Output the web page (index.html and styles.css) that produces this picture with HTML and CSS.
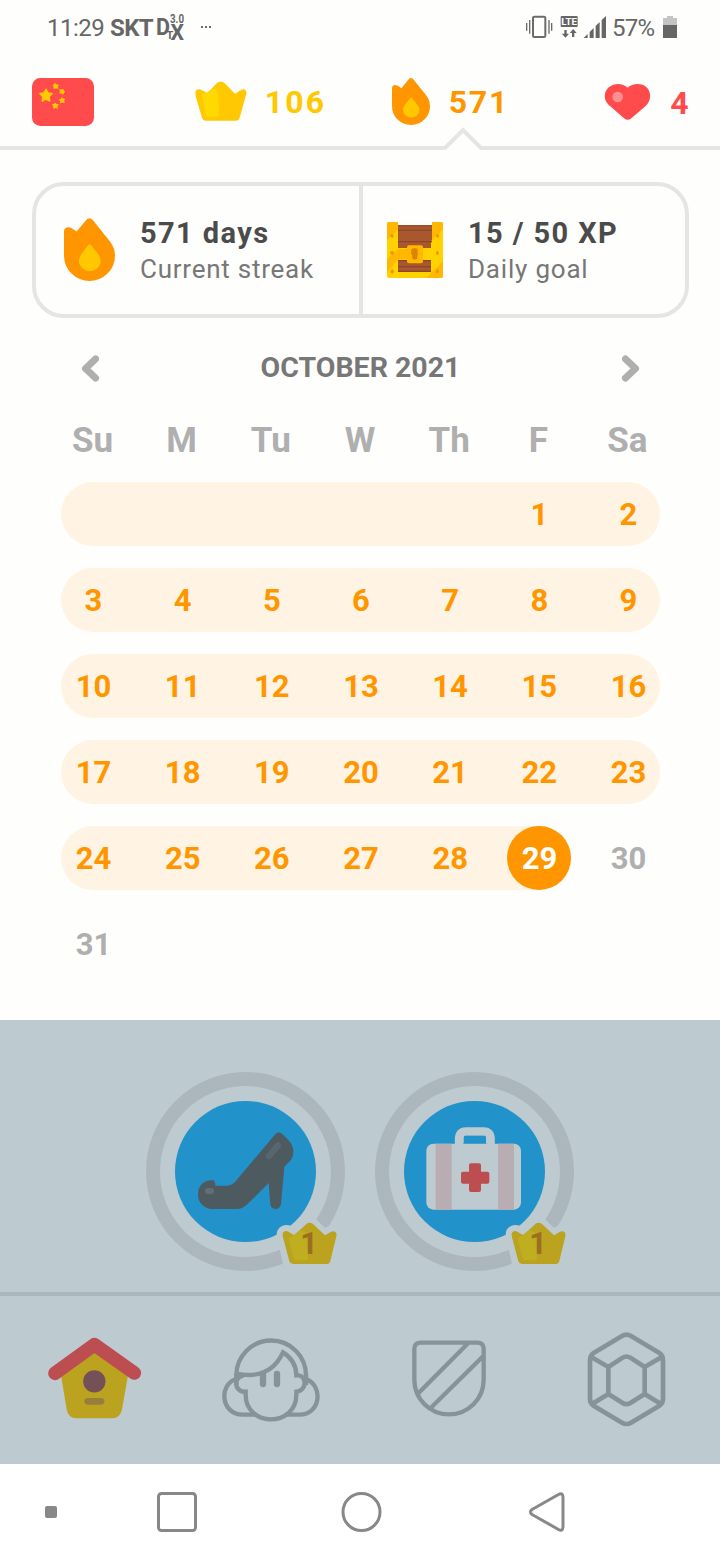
FILE: index.html
```
<!DOCTYPE html>
<html lang="en">
<head>
<meta charset="utf-8">
<title>Streak calendar</title>
<link rel="stylesheet" href="styles.css">
</head>
<body>
<svg width="0" height="0" class="defs">
  <defs>
    <g id="flame">
      <path fill="#ff9600" d="M132 184Q132 172 144 171Q152 170 170 184L199 149Q208 138 219 149L272 215Q286 234 286 257A77 76 0 0 1 132 257Z"/>
      <path fill="#ffc800" d="M205 225Q209 219 214 225L235 252Q243 262 243 271A33 32 0 0 1 177 271Q177 262 184 252Z"/>
    </g>
    <g id="shiny-crown">
      <path class="crown-base" d="M458 524Q458 513 469 513Q474 513 480 518L493 526L529 492Q539 484 549 492L585 526L602 516Q610 511 617 517Q621 521 619 529L601 603Q599 612 590 612H489Q481 612 478 604L459 532Z"/>
      <path class="crown-shine" d="M476 538Q477 530 487 529L505 514Q512 510 527 516L534 592Q535 601 525 601H501Q493 601 491 594Z"/>
    </g>
    <path id="crown-cut" d="M440 524Q440 504 458 497Q469 492 485 498L494 502L521 477Q539 462 557 477L585 503L603 494L650 500L640 640H465L443 540Z"/>
  </defs>
</svg>

<header class="status">
  <span class="time">11:29</span>
  <span class="carrier">SKT</span>
  <svg class="dmb" width="27" height="28" viewBox="0 0 27 28">
    <text x="-1" y="22" class="dmb-big" textLength="14" lengthAdjust="spacingAndGlyphs">D</text>
    <text x="9.500" y="26" class="dmb-small">T</text>
    <text x="13" y="9.500" class="dmb-tiny" textLength="14" lengthAdjust="spacingAndGlyphs">3.0</text>
    <text x="13.500" y="26.500" class="dmb-x" textLength="13.500" lengthAdjust="spacingAndGlyphs">X</text>
  </svg>
  <svg class="dots" width="10" height="2" viewBox="0 0 10 2"><path fill="#6b6b6b" d="M0 0h2v2H0zM4 0h2v2H4zM8 0h2v2H8z"/></svg>
  <svg class="tray" width="82" height="26" viewBox="496 42 246 78">
    <g fill="none" stroke="#6b6b6b">
      <rect x="520" y="50" width="37" height="61" rx="4" stroke-width="6"/>
      <path stroke-width="4" d="M510 60V101M501 69V92M568 60V101M576 69V92"/>
    </g>
    <rect x="603" y="48" width="51" height="33" rx="3" fill="#666"/>
    <text x="605" y="75" class="lte" textLength="47" lengthAdjust="spacingAndGlyphs">LTE</text>
    <path fill="#666" d="M614 90h7v11h7l-10.500 12-11-12h7.500zM637 111h7V99h7l-10.500-12-10.500 12h7zM672 114l12-12v12zM690 96l12-12v30h-12zM708 78l12-12v48h-12zM726 60l13-12v66h-13z"/>
  </svg>
  <span class="percent">57%</span>
  <svg class="battery" width="14" height="22" viewBox="0 0 14 22"><path fill="#c4c4c4" d="M4 0h6v2h4v8H0V2h4z"/><path fill="#666" d="M0 9h14v13H0z"/></svg>
</header>

<section class="stats">
  <div class="stats-row">
    <svg class="flag" width="62" height="48" viewBox="96 234 186 144">
      <rect x="96" y="234" width="186" height="144" rx="25" fill="#ff4b4b"/>
      <g fill="#ffc800" stroke="#ffc800" stroke-linejoin="round">
        <path stroke-width="5" d="M138 268L144 279L156 281L147 290L149 303L138 297L127 303L129 290L120 281L132 279Z"/>
        <path stroke-width="3" d="M165 250l4 5 6 0-3 5 2 5-6-1-6 2 0-6-3-5 5-1zM188 267l2 5 5 3-5 3-1 5-4-4-6 0 3-5-3-5 6 1zM185 293l3 4 6 0-3 5 2 6-6-2-5 3 0-6-4-4 6-1zM165 309l4 4 6 1-4 5 2 6-6-2-6 2 0-6-3-5 6-1z"/>
      </g>
    </svg>
    <div class="stat crowns">
      <svg width="52" height="40" viewBox="584 244 156 120">
        <path fill="#ffc800" d="M585 281Q585 269 596 269Q602 269 621 281L649 251Q661 240 673 251L704 282L722 271Q732 266 737 273Q740 278 737 286L718 354Q715 363 706 363H617Q608 363 605 354L586 290Z"/>
        <path fill="#ffd900" d="M604 286Q606 279 619 279Q631 268 642 268Q651 268 652 278L657 344Q657 353 648 353H628Q620 353 617 346Z"/>
      </svg>
      <span>106</span>
    </div>
    <div class="stat streak">
      <svg width="38" height="47" viewBox="132 143 154 190" preserveAspectRatio="none"><use href="#flame"/></svg>
      <span>571</span>
    </div>
    <div class="stat hearts">
      <svg width="46" height="36" viewBox="736 252 138 108">
        <path fill="#ff4b4b" d="M804 263Q792 252 775 252C741 252 724 287 744 311Q747 315 751 318L793 355Q804 364 815 355L858 318C884 294 871 252 834 252Q816 252 804 263Z"/>
        <circle cx="774" cy="291" r="16" fill="#ff9090"/>
      </svg>
      <span>4</span>
    </div>
  </div>
  <svg class="notch" width="720" height="23" viewBox="0 0 720 23"><path fill="none" stroke="#e5e5e5" stroke-width="4" d="M0 21H445L463 3L481 21H720"/></svg>
</section>

<main>
  <section class="summary">
    <div class="summary-item">
      <svg class="big-flame" width="51" height="63" viewBox="132 143 154 190"><use href="#flame"/></svg>
      <div class="summary-text"><b class="days">571 days</b><span class="cur">Current streak</span></div>
    </div>
    <div class="summary-item goal">
      <svg width="56" height="56" viewBox="81 156 168 168">
        <rect x="81" y="156" width="168" height="168" rx="6" fill="#ffd200"/>
        <path fill="#ffb700" d="M86 156H114V177L81 210V161Q81 156 86 156ZM216 156H244Q249 156 249 161V178L216 211ZM81 268L114 237H142V268H114L81 308ZM249 273V318Q249 324 243 324H200Z"/>
        <path fill="#fefefd" d="M114 155h102v11H114z"/>
        <path fill="#a9572d" d="M114 166h102v44l-3 3v21H114zM114 270h99v35H114z"/>
        <path fill="#8d452b" d="M114 166h102v3H114zM114 179h102v4H114zM114 213h102v4H114zM114 270h99v4H114zM114 288h99v4H114zM114 302h99v4H114z"/>
        <path fill="#ffd200" d="M114 237h102v31H114z"/><path fill="#ffb700" d="M114 237h28v31h-28z"/>
        <rect x="141" y="226" width="48" height="54" rx="6" fill="#ffb700"/>
        <path fill="#dc8500" d="M154 238l9-4 10 3v18l-2 12-9 2-6-5 1-7-4-7z"/>
        <path fill="#eb9a00" d="M90 194l7-3 5 6-4 7-7-3zM228 194l7-3 3 6-4 7-6-3zM91 245l6-3 6 6-5 8-7-4zM228 245l6-3 3 6-4 8-5-4zM91 301l6-3 6 6-5 7-7-3zM228 300l6-2 3 6-4 7-5-3z"/>
      </svg>
      <div class="summary-text"><b class="xp">15 / 50 XP</b><span class="daily">Daily goal</span></div>
    </div>
  </section>

  <section class="calendar">
    <div class="month">
      <svg width="17" height="27" viewBox="0 0 17 27"><path d="M13.500 4L3.500 13.500L13.500 23"/></svg>
      <h1>OCTOBER 2021</h1>
      <svg width="17" height="27" viewBox="0 0 17 27"><path d="M3.500 4L13.500 13.500L3.500 23"/></svg>
    </div>
    <div class="week names"><span>Su</span><span>M</span><span>Tu</span><span>W</span><span>Th</span><span>F</span><span>Sa</span></div>
    <div class="week lit"><span></span><span></span><span></span><span></span><span></span><span>1</span><span>2</span></div>
    <div class="week lit"><span>3</span><span>4</span><span>5</span><span>6</span><span>7</span><span>8</span><span>9</span></div>
    <div class="week lit"><span>10</span><span>11</span><span>12</span><span>13</span><span>14</span><span>15</span><span>16</span></div>
    <div class="week lit"><span>17</span><span>18</span><span>19</span><span>20</span><span>21</span><span>22</span><span>23</span></div>
    <div class="week">
      <div class="week lit partial"><span>24</span><span>25</span><span>26</span><span>27</span><span>28</span><span class="today">29</span></div>
      <span>30</span>
    </div>
    <div class="week"><span>31</span></div>
  </section>
</main>

<section class="skills">
  <svg width="199" height="199" viewBox="48 36 597 597">
    <circle cx="346.500" cy="334.500" r="277.500" fill="none" stroke="#abb7bd" stroke-width="42"/>
    <circle cx="346.500" cy="334.500" r="211.500" fill="#2192ca"/>
    <path fill="#4d5a60" d="M437 221Q446 212 456 221L475 240Q490 256 490 276Q490 292 480 303L463 320L453 433Q450 447 436 447Q423 446 421 433L416 369L352 433Q338 447 321 447H247A43 43 0 0 1 204 404Q204 363 248 360Q256 362 256 377H289Q304 377 315 366Z"/>
    <path stroke="#58666d" stroke-width="19" stroke-linecap="round" d="M417 288L444 256"/>
    <rect x="225" y="384" width="27" height="18" rx="9" fill="#616e75"/>
    <use href="#crown-cut" fill="#bdcacf"/>
    <use href="#shiny-crown"/>
    <text x="511" y="581" class="level">1</text>
  </svg>
  <svg width="199" height="199" viewBox="45 36 597 597">
    <circle cx="343.500" cy="334.500" r="277.500" fill="none" stroke="#abb7bd" stroke-width="42"/>
    <circle cx="343.500" cy="334.500" r="211.500" fill="#2192ca"/>
    <path fill="none" stroke="#bdcacf" stroke-width="25" d="M297 258V238Q297 214 318 214H371Q392 214 392 238V258"/>
    <path fill="none" stroke="#bdcacf" stroke-width="6" d="M308 250V232Q308 223 317 223H372Q381 223 381 232V250"/>
    <rect x="199" y="251" width="284" height="198" rx="21" fill="#bdcacf"/>
    <path fill="#b8adb3" d="M227 251h48v198h-48zM414 251h48v198h-48z"/>
    <path fill="#bc4d50" d="M333 310H357Q363 310 363 316V335H382Q388 335 388 341V365Q388 371 382 371H363V390Q363 396 357 396H333Q327 396 327 390V371H309Q303 371 303 365V341Q303 335 309 335H327V316Q327 310 333 310Z"/>
    <g transform="translate(-3 0)">
      <use href="#crown-cut" fill="#bdcacf"/>
      <use href="#shiny-crown"/>
      <text x="511" y="581" class="level">1</text>
    </g>
  </svg>
</section>

<nav class="tabs">
  <svg class="tab-home" width="94" height="82" viewBox="83 170 282 246">
    <path fill="#bba31f" d="M222 205L323 285L305 387Q300 414 275 414H169Q143 414 139 387L122 285Z"/>
    <path fill="none" stroke="#bc4d50" stroke-width="41" stroke-linecap="round" stroke-linejoin="round" d="M104 279L222 193L342 278"/>
    <circle cx="222" cy="303" r="33.500" fill="#765057"/>
    <rect x="192" y="353" width="60" height="20" rx="10" fill="#997d3c"/>
  </svg>
  <svg class="tab-profile" width="98" height="84" viewBox="606 174 294 252">
    <g fill="none" stroke="#86949a" stroke-width="13">
      <path d="M649 292V286A104.500 104.500 0 0 1 858 286V292"/>
      <path d="M650 281Q750 301 789 217Q829 242 829 286C862 283 862 333 829 335V345C829 390 793 418 753 418S677 390 677 345V335C654 337 643 316 652 298Q657 290 670 287"/>
      <path d="M649 297C595 313 602 404 669 404H707M799 404H839C902 404 911 317 858 297M649 280V316M858 280V316"/>
      <path stroke-width="19" stroke-linecap="round" d="M729 284V312M771 282V312"/>
    </g>
  </svg>
  <svg class="tab-league" width="74" height="77" viewBox="96 181 222 231">
    <path fill="none" stroke="#86949a" stroke-width="13" d="M123 189H292Q311 189 311 208V300A104 104 0 0 1 103 300V208Q103 189 123 189ZM265 190L115 341M310 229L152 385"/>
  </svg>
  <svg class="tab-gem" width="79" height="95" viewBox="620 157 237 285">
    <path fill="none" stroke="#86949a" stroke-width="14" stroke-linejoin="round" d="M725 169Q738 161 752 169L836 219Q848 227 848 241V358Q848 371 836 379L752 429Q738 437 725 429L641 379Q629 371 629 358V241Q629 227 641 219ZM684 262L727 234Q738 227 750 234L793 262V343L750 370Q738 377 727 370L684 343ZM634 233L684 262M843 233L793 262M634 374L684 343M843 374L793 343"/>
  </svg>
</nav>

<footer class="system">
  <i></i>
  <svg width="520" height="40" viewBox="157 1492 520 40" fill="none" stroke="#888" stroke-width="3">
    <rect x="158.500" y="1493.500" width="37" height="37" rx="3"/>
    <circle cx="361.500" cy="1512" r="18.500"/>
    <path stroke-linejoin="round" d="M558.500 1494.500Q562.500 1492 563 1497V1527Q562.500 1532 558.500 1529.500L532 1514.500Q529 1512 532 1509.500Z"/>
  </svg>
</footer>
</body>
</html>
```
FILE: styles.css
```
* { box-sizing: border-box; }
body {
  margin: 0;
  width: 720px;
  height: 1560px;
  display: flex;
  flex-direction: column;
  overflow: hidden;
  background: #fefefd;
  font-family: Roboto, "Liberation Sans", sans-serif;
}
svg { display: block; flex: none; overflow: visible; }
.defs { position: absolute; }
.status {
  height: 56px;
  flex: none;
  display: flex;
  align-items: center;
  padding: 0 42px 0 47px;
  font-size: 24px;
  line-height: 28px;
  color: #666;
}
.time { width: 63px; font-weight: 400; letter-spacing: -0.5px; }
.carrier { width: 47px; font-weight: 700; letter-spacing: -0.6px; }
.dmb { margin-top: -2px; fill: #666; font-weight: 700; }
.dmb-big { font-size: 23px; }
.dmb-small { font-size: 11px; }
.dmb-tiny { font-size: 12px; }
.dmb-x { font-size: 22px; }
.dots { margin-left: 17px; margin-top: -2px; }
.tray { margin-left: auto; margin-top: -2px; }
.lte { font-size: 29px; font-weight: 700; fill: #fff; }
.percent { margin-left: 5px; width: 51px; letter-spacing: -0.8px; }
.battery { margin-top: -2px; margin-right: 1px; }
.stats { flex: none; height: 94px; }
.stats-row { display: flex; align-items: center; height: 71px; padding: 21px 0 0 32px; }
.stat {
  display: flex;
  align-items: center;
  font-size: 32px;
  font-weight: 700;
  line-height: 40px;
  letter-spacing: 2.2px;
}
.stat span { padding-top: 1px; }
.crowns { width: 197px; margin-left: 100.700px; margin-top: -1.500px; color: #ffc800; }
.crowns svg { margin-right: 18px; }
.streak svg, .hearts svg { margin-right: 19px; }
.streak { width: 213.500px; margin-top: -1.500px; color: #ff9600; letter-spacing: 1.800px; }
.hearts { color: #ff4b4b; }
.summary {
  display: flex;
  width: 657px;
  height: 136px;
  margin: 32px 0 0 32px;
  border: 4px solid #e5e5e5;
  border-radius: 32px;
}
.summary-item { display: flex; align-items: center; flex: none; width: 323px; padding-left: 28px; gap: 25px; }
.big-flame { margin-top: -1px; }
.goal { width: 326px; border-left: 4px solid #e5e5e5; padding-left: 24px; }
.summary-text { display: flex; flex-direction: column; gap: 2px; padding-top: 2px; white-space: nowrap; }
.summary-text b { font-size: 29px; line-height: 34px; color: #4b4b4b; }
.summary-text span { font-size: 26px; line-height: 34px; color: #777; }
.summary-text .days { letter-spacing: 1.400px; }
.summary-text .xp { letter-spacing: 1.400px; }
.summary-text .cur { letter-spacing: 0.750px; }
.summary-text .daily { letter-spacing: 0.800px; }
.month {
  display: flex;
  justify-content: space-between;
  align-items: center;
  height: 40px;
  margin: 30px 81px 0 82px;
}
.month h1 { margin: 0; font-size: 28.500px; line-height: 38px; color: #777; }
.month path { fill: none; stroke: #afafaf; stroke-width: 7; stroke-linecap: round; stroke-linejoin: round; }
.week {
  display: flex;
  justify-content: space-between;
  width: 599px;
  height: 64px;
  margin: 0 0 22px 61px;
  border-radius: 32px;
  color: #afafaf;
  font-size: 31px;
  font-weight: 700;
  line-height: 65px;
}
.week span { width: 64px; padding-left: 1px; text-align: center; }
.names { height: 50px; margin-top: 28px; margin-bottom: 16px; font-size: 35px; line-height: 50px; }
.names span { padding: 0 1px 0 0; }
.lit { background: #fff4e4; color: #ff9600; }
.partial { width: 510px; margin: 0; }
.week .today { border-radius: 50%; background: #ff9600; color: #fff; }
.skills {
  display: flex;
  justify-content: center;
  gap: 30px;
  flex: none;
  height: 272px;
  margin-top: auto;
  padding-top: 52px;
  background: #bdcacf;
}
.crown-base { fill: #bba31f; }
.crown-shine { fill: #bfae1f; }
.level { font-size: 92px; font-weight: 700; fill: #9c6e1f; }
.tabs {
  display: flex;
  align-items: flex-start;
  flex: none;
  height: 172px;
  padding-left: 47.700px;
  border-top: 4px solid #abb7bd;
  background: #bdcacf;
}
.tab-home { margin-top: 40.700px; }
.tab-profile { margin: 42px 0 0 80.300px; }
.tab-league { margin: 44.300px 0 0 92px; }
.tab-gem { margin: 36.300px 0 0 100.700px; }
.system { display: flex; align-items: center; flex: none; height: 96px; padding-left: 45px; background: #fff; }
.system i { width: 12px; height: 12px; margin-right: 100px; border-radius: 2px; background: #888; }
```
